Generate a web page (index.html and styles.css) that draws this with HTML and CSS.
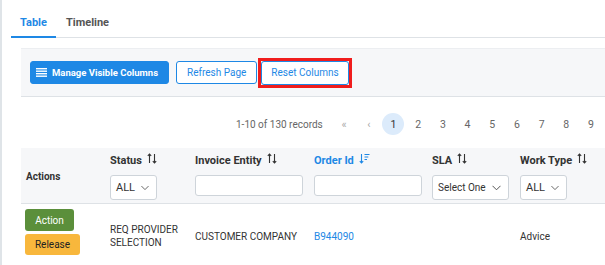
FILE: index.html
```html
<!DOCTYPE html>
<html lang="en">
<head>
  <meta charset="UTF-8">
  <title>Orders</title>
  <link rel="stylesheet" href="styles.css">
</head>

<body>
  <div class="page">

    <!-- Tabs -->
    <div class="tabs">
      <div class="tab active">Table</div>
      <div class="tab">Timeline</div>
    </div>

    <!-- Toolbar -->
    <div class="toolbar">
      <button class="btn btn-primary">
        <svg class="btn-icon" width="11" height="9" viewBox="0 0 11 9">
          <rect x="0" y="0" width="11" height="1.4" fill="#fff"/>
          <rect x="0" y="2.5" width="11" height="1.4" fill="#fff"/>
          <rect x="0" y="5" width="11" height="1.4" fill="#fff"/>
          <rect x="0" y="7.5" width="11" height="1.4" fill="#fff"/>
        </svg>
        Manage Visible Columns
      </button>
      <button class="btn btn-outline">Refresh Page</button>
      <span class="highlight">
        <button class="btn btn-outline">Reset Columns</button>
      </span>
    </div>

    <!-- Pagination -->
    <div class="pager">
      <span class="pager-info">1-10 of 130 records</span>
      <span class="page-item muted">&laquo;</span>
      <span class="page-item muted">&lsaquo;</span>
      <span class="page-item current">1</span>
      <span class="page-item">2</span>
      <span class="page-item">3</span>
      <span class="page-item">4</span>
      <span class="page-item">5</span>
      <span class="page-item">6</span>
      <span class="page-item">7</span>
      <span class="page-item">8</span>
      <span class="page-item">9</span>
    </div>

    <!-- Table -->
    <table class="grid">
      <colgroup>
        <col class="col-actions">
        <col class="col-status">
        <col class="col-entity">
        <col class="col-order">
        <col class="col-sla">
        <col class="col-type">
      </colgroup>
      <thead>
        <tr>
          <th class="th-plain">Actions</th>
          <th>
            <div class="th-label">Status
              <svg class="sort" width="10" height="11" viewBox="0 0 10 11"><path d="M2.5 10V1M0.8 2.8L2.5 1l1.7 1.8M7.5 1v9M5.8 8.2L7.5 10l1.7-1.8" fill="none" stroke="#333" stroke-width="1.1"/></svg>
            </div>
            <div class="select select-sm">ALL <svg class="chev" width="9" height="6" viewBox="0 0 9 6"><path d="M0.5 0.8L4.5 4.8l4-4" fill="none" stroke="#555" stroke-width="1"/></svg></div>
          </th>
          <th>
            <div class="th-label">Invoice Entity
              <svg class="sort" width="10" height="11" viewBox="0 0 10 11"><path d="M2.5 10V1M0.8 2.8L2.5 1l1.7 1.8M7.5 1v9M5.8 8.2L7.5 10l1.7-1.8" fill="none" stroke="#333" stroke-width="1.1"/></svg>
            </div>
            <div class="input"></div>
          </th>
          <th>
            <div class="th-label sorted">Order Id
              <svg class="sort" width="11" height="11" viewBox="0 0 11 11"><path d="M2.5 1v9M0.8 8.2L2.5 10l1.7-1.8M5.5 1.5h5M5.5 4h3.8M5.5 6.5h2.5" fill="none" stroke="#1e88e5" stroke-width="1.1"/></svg>
            </div>
            <div class="input"></div>
          </th>
          <th>
            <div class="th-label">SLA
              <svg class="sort" width="10" height="11" viewBox="0 0 10 11"><path d="M2.5 10V1M0.8 2.8L2.5 1l1.7 1.8M7.5 1v9M5.8 8.2L7.5 10l1.7-1.8" fill="none" stroke="#333" stroke-width="1.1"/></svg>
            </div>
            <div class="select select-md">Select One <svg class="chev" width="9" height="6" viewBox="0 0 9 6"><path d="M0.5 0.8L4.5 4.8l4-4" fill="none" stroke="#555" stroke-width="1"/></svg></div>
          </th>
          <th>
            <div class="th-label">Work Type
              <svg class="sort" width="10" height="11" viewBox="0 0 10 11"><path d="M2.5 10V1M0.8 2.8L2.5 1l1.7 1.8M7.5 1v9M5.8 8.2L7.5 10l1.7-1.8" fill="none" stroke="#333" stroke-width="1.1"/></svg>
            </div>
            <div class="select select-sm">ALL <svg class="chev" width="9" height="6" viewBox="0 0 9 6"><path d="M0.5 0.8L4.5 4.8l4-4" fill="none" stroke="#555" stroke-width="1"/></svg></div>
          </th>
        </tr>
      </thead>
      <tbody>
        <tr>
          <td class="td-actions">
            <button class="btn-small btn-green">Action</button>
            <button class="btn-small btn-orange">Release</button>
          </td>
          <td>REQ PROVIDER<br>SELECTION</td>
          <td>CUSTOMER COMPANY</td>
          <td class="link">B944090</td>
          <td></td>
          <td>Advice</td>
        </tr>
      </tbody>
    </table>

  </div>
</body>
</html>
```

FILE: styles.css
```css
:root {
  --blue: #1e88e5;
  --text: #333333;
  --muted: #666666;
  --border: #dee2e6;
  --input-border: #ced4da;
  --panel: #f6f7f9;
}

html, body {
  margin: 0;
  padding: 0;
  width: 605px;
  height: 265px;
  overflow: hidden;
  background: #ffffff;
  font-family: Roboto, 'Liberation Sans', sans-serif;
  font-size: 10px;
  color: var(--text);
}

.page {
  border-left: 2px solid #dfe4e8;
  height: 265px;
  box-sizing: border-box;
  width: 700px;
}

/* Tabs */
.tabs {
  display: flex;
  margin-left: 9px;
  border-bottom: 1px solid var(--border);
}

.tab {
  padding: 16px 9px 6px;
  line-height: 14px;
  font-size: 11px;
  font-weight: 700;
  color: #555;
  border-bottom: 2px solid transparent;
  margin-bottom: -1px;
}

.tab.active {
  color: var(--blue);
  border-bottom-color: var(--blue);
}

.tab + .tab {
  padding-left: 10px;
}

/* Toolbar */
.toolbar {
  display: flex;
  align-items: center;
  gap: 7px;
  margin: 10px 0 0 19px;
  padding: 0 9px;
  height: 47px;
  background: var(--panel);
  border-top: 1px solid #eceef1;
  border-bottom: 1px solid var(--border);
}

.btn {
  display: flex;
  align-items: center;
  height: 23px;
  padding: 0 10px;
  border-radius: 3px;
  font-family: inherit;
  font-size: 10px;
  cursor: pointer;
}

.btn-primary {
  background: var(--blue);
  border: 1px solid var(--blue);
  color: #fff;
  font-weight: 700;
  font-size: 9.5px;
  padding: 0 10px 0 5px;
}

.btn-icon {
  margin-right: 5px;
}

.btn-outline {
  background: #fff;
  border: 1px solid var(--blue);
  color: var(--blue);
}

.highlight {
  display: flex;
  margin-left: -6px;
  border: 3px solid #f01d1d;
  padding: 0;
}

.highlight .btn {
  height: 24px;
  padding: 0 9px;
}

/* Pagination */
.pager {
  display: flex;
  align-items: center;
  height: 24px;
  margin: 15px 0 0 234px;
  color: var(--muted);
  font-size: 10px;
}

.pager-info {
  margin-right: 9px;
}

.page-item {
  width: 24.7px;
  height: 22px;
  display: flex;
  align-items: center;
  justify-content: center;
  flex-shrink: 0;
  font-size: 10.5px;
}

.page-item.muted {
  color: #aaa;
  font-size: 11px;
}

.page-item.current {
  background: #dcebfb;
  border-radius: 50%;
  width: 22px;
  margin: 0 1.35px;
  color: #333;
}

/* Table */
.grid {
  margin: 12px 0 0 19px;
  border-collapse: collapse;
  table-layout: fixed;
  width: 640px;
}

.col-actions { width: 84px; }
.col-status { width: 85px; }
.col-entity { width: 119px; }
.col-order { width: 118px; }
.col-sla { width: 88px; }
.col-type { width: 146px; }

.grid thead tr {
  background: var(--panel);
  border-bottom: 1px solid var(--border);
}

.grid th {
  text-align: left;
  vertical-align: top;
  padding: 5px 5px 3px;
  height: 47px;
  font-size: 11px;
  font-weight: 700;
}

.grid th.th-plain {
  vertical-align: middle;
  font-size: 10px;
}

.th-label {
  display: flex;
  align-items: center;
  height: 14px;
  margin-bottom: 8px;
  white-space: nowrap;
}

.th-label.sorted {
  color: var(--blue);
}

.sort {
  margin-left: 5px;
  margin-top: -3px;
}

.select {
  display: flex;
  align-items: center;
  justify-content: space-between;
  box-sizing: border-box;
  height: 25px;
  padding: 0 7px 0 5px;
  background: #fff;
  border: 1px solid var(--input-border);
  border-radius: 3px;
  font-weight: 400;
  color: var(--text);
  white-space: nowrap;
}

.select-sm { width: 47px; font-size: 11px; }
.select-md { width: 77px; font-size: 10px; }

.chev {
  margin-left: 6px;
}

.input {
  box-sizing: border-box;
  width: 108px;
  height: 21px;
  margin-top: 2px;
  background: #fff;
  border: 1px solid var(--input-border);
  border-radius: 3px;
}

.grid tbody tr {
  border-bottom: 1px solid var(--border);
}

.grid td {
  padding: 0 5px;
  height: 59px;
  line-height: 13px;
  vertical-align: middle;
  white-space: nowrap;
}

.grid td.td-actions {
  vertical-align: top;
  padding: 5px 4px 0;
}

.btn-small {
  display: block;
  height: 22px;
  padding: 0;
  border: none;
  border-radius: 3px;
  font-family: inherit;
  font-size: 10px;
  color: #222;
}

.btn-green {
  background: #5b8f3b;
  color: #fff;
  width: 49px;
  margin-bottom: 3px;
}

.btn-orange {
  background: #f8b73c;
  width: 55px;
  height: 21px;
}

.link {
  color: var(--blue);
}
```
